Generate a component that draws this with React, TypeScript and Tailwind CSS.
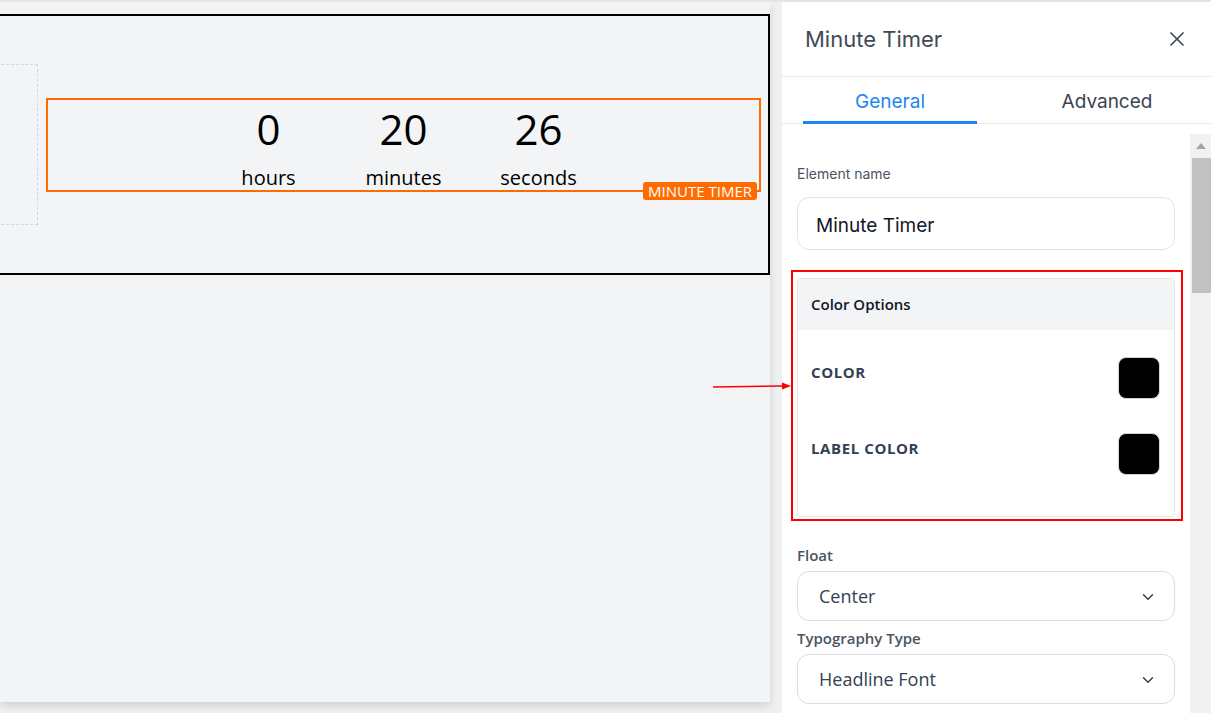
import { X, ChevronDown } from "lucide-react";

const units = [
  { value: "0", label: "hours" },
  { value: "20", label: "minutes" },
  { value: "26", label: "seconds" },
];

const colorRows = ["COLOR", "LABEL COLOR"];

function SelectField({ label, value }: { label: string; value: string }) {
  return (
    <div className="flex flex-col">
      <span className="text-[15px] leading-5 font-semibold text-[#4b5563] font-['Open_Sans',sans-serif]">
        {label}
      </span>
      <div className="mt-[6px] h-[50px] rounded-xl border border-[#dcdde3] flex items-center justify-between pl-[21px] pr-[17px] pt-[1px]">
        <span className="text-[18px] text-[#334155] font-['Open_Sans',sans-serif]">{value}</span>
        <ChevronDown size={18} strokeWidth={2} className="text-[#334155]" />
      </div>
    </div>
  );
}

export default function App() {
  return (
    <div className="relative w-[1211px] h-[713px] overflow-hidden flex bg-[#eef0f2] border-t-2 border-[#e3e4e6]">
      {/* builder canvas */}
      <div className="w-[782px] shrink-0">
        <div className="w-[770px] h-[700px] bg-[#f3f4f6] shadow-[0_4px_8px_rgba(0,0,0,0.12)] pt-[12px] overflow-hidden">
          <div className="ml-[-20px] w-[790px] h-[261px] border-2 border-black flex items-center pr-[7px]">
            <div className="w-[56px] h-[161px] border border-dashed border-[#d3d6e0] shrink-0" />
            <div className="relative ml-[8px] flex-1 h-[94px] border-2 border-[#ff6b00] flex justify-center pt-[7px] font-['Open_Sans',sans-serif]">
              {units.map((u) => (
                <div key={u.label} className="w-[135px] flex flex-col items-center">
                  <span className="text-[42px] leading-[44px] text-black">{u.value}</span>
                  <span className="mt-[15px] text-[20px] leading-6 text-black">{u.label}</span>
                </div>
              ))}
              <span className="absolute right-[2px] bottom-[-10px] h-[18px] px-[5px] rounded-[3px] bg-[#ff6b00] text-white text-[15px] leading-[18px]">
                MINUTE TIMER
              </span>
            </div>
          </div>
        </div>
      </div>

      {/* settings panel */}
      <div className="w-[429px] shrink-0 bg-white flex flex-col font-['Inter',sans-serif]">
        <div className="h-[75px] border-b border-[#e5e7eb] flex items-center justify-between pl-[23px] pr-[22px]">
          <span className="text-[22px] text-[#3f4a55]">Minute Timer</span>
          <X size={24} strokeWidth={1.75} className="text-[#3f4a55]" />
        </div>
        <div className="h-[47px] border-b border-[#e5e7eb] flex justify-between pl-[21px] pr-[17px]">
          <div className="w-[174px] flex items-center justify-center border-b-[3px] border-[#1b86f2] mb-[-1px] pt-[6px]">
            <span className="text-[19px] text-[#1b86f2]">General</span>
          </div>
          <div className="w-[174px] flex items-center justify-center pt-[5px]">
            <span className="text-[19px] text-[#3a4450]">Advanced</span>
          </div>
        </div>

        <div className="flex-1 flex min-h-0">
          <div className="flex-1 pl-[15px] pr-[15px] pt-[40px]">
            <span className="block text-[14px] leading-5 text-[#4b5563]">Element name</span>
            <div className="mt-[13px] h-[53px] rounded-xl border border-[#e2e4e9] flex items-center pl-[18px] pt-[5px]">
              <span className="text-[19px] text-[#111827]">Minute Timer</span>
            </div>

            <div className="mt-[20px] ml-[-6px] mr-[-8px] border-2 border-[#ff0000] pt-[6px] pl-[4px] pr-[6px] pb-[2px]">
              <div className="border border-[#e3e5e8] rounded-sm font-['Open_Sans',sans-serif]">
                <div className="h-[51px] bg-[#f3f4f6] flex items-center pl-[13px]">
                  <span className="text-[15px] font-semibold text-[#111827]">Color Options</span>
                </div>
                <div className="flex flex-col gap-[34px] pt-[27px] pb-[41px] pl-[13px] pr-[14px]">
                  {colorRows.map((r) => (
                    <div key={r} className="flex items-start justify-between">
                      <span className="mt-[5px] text-[15px] leading-5 font-bold tracking-[0.04em] text-[#334155]">
                        {r}
                      </span>
                      <div className="w-[42px] h-[42px] rounded-lg bg-black border border-[#d1d5db]" />
                    </div>
                  ))}
                </div>
              </div>
            </div>

            <div className="mt-[24px] flex flex-col gap-[7px]">
              <SelectField label="Float" value="Center" />
              <SelectField label="Typography Type" value="Headline Font" />
            </div>
          </div>

          {/* scrollbar */}
          <div className="w-[21px] mt-[10px] bg-[#f1f1f1] flex flex-col items-center">
            <div className="h-[24px] flex items-center justify-center">
              <div className="w-0 h-0 border-l-[5px] border-r-[5px] border-b-[6px] border-l-transparent border-r-transparent border-b-[#a3a3a3]" />
            </div>
            <div className="ml-[2px] w-[19px] h-[135px] bg-[#c1c1c1]" />
          </div>
        </div>
      </div>

      {/* annotation arrow */}
      <svg className="absolute left-[712px] top-[376px]" width="82" height="16" viewBox="0 0 82 16">
        <line x1="1" y1="9" x2="72" y2="8" stroke="#ff0000" strokeWidth="1.5" />
        <polygon points="70,4.5 79,8 70,11.5" fill="#ff0000" />
      </svg>
    </div>
  );
}
